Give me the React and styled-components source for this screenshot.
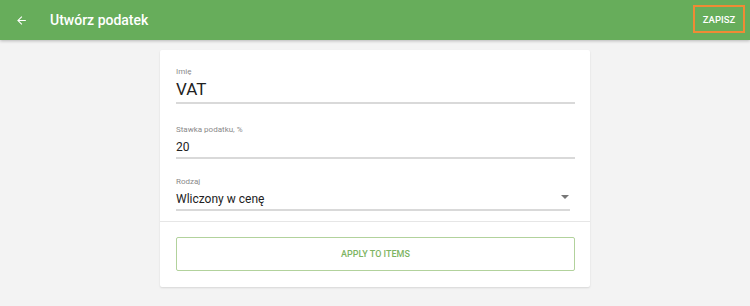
import React from 'react'
import styled, { createGlobalStyle } from 'styled-components'

const GlobalStyle = createGlobalStyle`
  html, body {
    margin: 0;
    padding: 0;
    background: #f3f3f3;
    font-family: Roboto, "Liberation Sans", sans-serif;
  }
`

const Page = styled.div`
  min-height: 306px;
  background: #f3f3f3;
`

const Header = styled.header`
  height: 40px;
  background: #67ad5b;
  display: flex;
  align-items: center;
  box-shadow: 0 1px 3px rgba(0, 0, 0, 0.25);
  color: #fff;
`

const BackButton = styled.button`
  width: 44px;
  height: 40px;
  padding: 0 0 0 15px;
  border: none;
  background: none;
  display: flex;
  align-items: center;
  cursor: pointer;
`

const Title = styled.h1`
  margin: 0 0 0 6px;
  font-size: 14px;
  font-weight: 500;
  flex: 1;
`

const SaveButton = styled.button`
  margin-right: 5px;
  width: 52px;
  height: 28px;
  border: 2px solid #f08a35;
  background: none;
  color: #fff;
  font-family: Roboto, sans-serif;
  font-size: 9.5px;
  font-weight: 500;
  padding: 0;
  margin-top: -2px;
  cursor: pointer;
`

const Card = styled.div`
  width: 430px;
  margin: 10px auto 0;
  background: #fff;
  box-shadow: 0 1px 2px rgba(0, 0, 0, 0.12);
  border-radius: 2px;
`

const Fields = styled.div`
  padding: 16px 15px 10px 16px;
  border-bottom: 1px solid #e6e6e6;
`

const Field = styled.div`
  margin-top: ${p => p.$gap || 0}px;
  margin-right: ${p => p.$inset || 0}px;
  border-bottom: 2px solid #d9d9d9;
  position: relative;
`

const Label = styled.div`
  font-size: 8px;
  line-height: 12px;
  color: #8a8a8a;
`

const Value = styled.div`
  font-size: ${p => p.$size}px;
  line-height: ${p => p.$line}px;
  margin-top: ${p => p.$top}px;
  margin-bottom: ${p => p.$bottom}px;
  color: #222;
`

const Caret = styled.span`
  position: absolute;
  right: 1px;
  bottom: 10px;
  width: 0;
  height: 0;
  border-left: 4px solid transparent;
  border-right: 4px solid transparent;
  border-top: 4px solid #777;
`

const Actions = styled.div`
  padding: 15px 15px 16px 16px;
`

const OutlineButton = styled.button`
  width: 100%;
  height: 34px;
  border: 1px solid #b2d29c;
  border-radius: 2px;
  background: #fff;
  color: #7db462;
  font-family: Roboto, sans-serif;
  font-size: 9px;
  font-weight: 500;
  cursor: pointer;
`

function BackArrow() {
  return (
    <svg width="13" height="13" viewBox="0 0 24 24">
      <path d="M20 11H7.83l5.59-5.59L12 4l-8 8 8 8 1.41-1.41L7.83 13H20v-2z" fill="#fff" />
    </svg>
  )
}

export default function App() {
  return (
    <Page>
      <GlobalStyle />
      <Header>
        <BackButton><BackArrow /></BackButton>
        <Title>Utwórz podatek</Title>
        <SaveButton>ZAPISZ</SaveButton>
      </Header>
      <Card>
        <Fields>
          <Field>
            <Label>Imię</Label>
            <Value $size={17} $line={20} $top={1} $bottom={3}>VAT</Value>
          </Field>
          <Field $gap={20}>
            <Label>Stawka podatku, %</Label>
            <Value $size={12} $line={16} $top={3} $bottom={2}>20</Value>
          </Field>
          <Field $gap={17} $inset={5}>
            <Label>Rodzaj</Label>
            <Value $size={12} $line={16} $top={3} $bottom={2}>Wliczony w cenę</Value>
            <Caret />
          </Field>
        </Fields>
        <Actions>
          <OutlineButton>APPLY TO ITEMS</OutlineButton>
        </Actions>
      </Card>
    </Page>
  )
}
